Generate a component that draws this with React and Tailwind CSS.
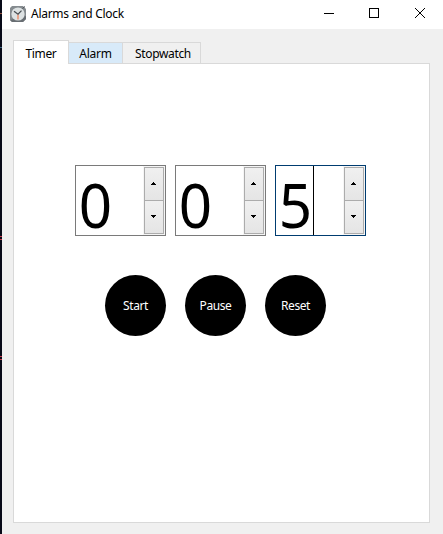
import React from 'react';

function ClockIcon() {
  return (
    <svg width="16" height="16" viewBox="0 0 16 16" className="mr-[5px] shrink-0">
      <path d="M2 0h11l3 3v10l-3 3H2l-2-2V2z" fill="#858b8f" />
      <path d="M0 14l2 2h11l3-3v-3z" fill="#686e73" />
      <circle cx="8" cy="8" r="6.6" fill="#dde2e3" />
      <path d="M8 8.5v5" stroke="#e8a68e" strokeWidth="2" />
      <path d="M4 5.2l4 3 3.5-3.6" stroke="#474d52" strokeWidth="1.3" fill="none" />
      <path d="M12.5 2.5L15 0.5" stroke="#474d52" strokeWidth="1" />
    </svg>
  );
}

function TitleBar() {
  return (
    <header className="flex h-[29px] shrink-0 items-start bg-white pl-2">
      <div className="flex h-[27px] grow items-center">
        <ClockIcon />
        <span className="whitespace-nowrap text-[12px] leading-4 tracking-[-0.27px]">Alarms and Clock</span>
      </div>
      <svg width="119" height="27" viewBox="324 0 119 27" shapeRendering="crispEdges" className="shrink-0">
        <path d="M324 13.5h10" stroke="#000" />
        <rect x="369.5" y="8.5" width="9" height="9" fill="none" stroke="#000" />
        <path d="M415 8l10 10M425 8l-10 10" stroke="#000" strokeWidth="1" shapeRendering="auto" />
      </svg>
    </header>
  );
}

function Tabs() {
  return (
    <nav className="flex h-[23px] items-end text-[12px] leading-4">
      <div className="z-10 -mb-px flex h-6 w-14 justify-center self-start border border-b-0 border-[#d9d9d9] bg-white pt-[5px] tracking-[-0.35px]">Timer</div>
      <div className="-ml-px flex h-[21px] w-[54px] justify-center border-t border-[#d9d9d9] bg-[#d8eaf9] pl-px pt-[3px] tracking-[-0.25px]">Alarm</div>
      <div className="flex h-[21px] w-[79px] justify-center border border-b-0 border-[#d9d9d9] bg-[#f0f0f0] pl-[3px] pt-[3px] tracking-[-0.35px]">Stopwatch</div>
    </nav>
  );
}

function StepButton({ down = false }) {
  return (
    <div className="flex h-[34px] w-5 items-start border border-[#acacac] bg-linear-to-b from-[#f0f0f0] to-[#e5e5e5] pl-[6px] pt-[14px]">
      <svg width="5" height="3" viewBox="0 0 5 3" shapeRendering="crispEdges">
        <path d={down ? 'M0 0h5v1H4v1H3v1H2V2H1V1H0z' : 'M2 0h1v1h1v1h1v1H0V2h1V1h1z'} />
      </svg>
    </div>
  );
}

function SpinBox({ value, focused = false }) {
  return (
    <div className={`flex h-[71px] w-[91px] justify-between border bg-white ${focused ? 'border-[#003c70]' : 'border-[#7a7a7a]'}`}>
      <div className="flex">
        <span className="w-[37px] origin-left scale-x-[0.94] whitespace-nowrap pl-[3px] pt-[5px] text-[62px] leading-[66px]">{value}</span>
        {focused && <span className="h-full w-px bg-black" />}
      </div>
      <div className="flex w-[22px] flex-col bg-[#f5f5f5] px-px pt-px">
        <StepButton />
        <div className="-mt-px">
          <StepButton down />
        </div>
      </div>
    </div>
  );
}

function RoundButton({ children }) {
  return (
    <button className="flex size-[61px] items-center justify-center rounded-full bg-black text-[12px] leading-4 tracking-[-0.4px] text-white">{children}</button>
  );
}

export default function App() {
  return (
    <div className="flex h-[534px] w-[443px] overflow-hidden bg-[#f0f0f0] font-['Noto_Sans','Open_Sans',sans-serif] text-black">
      <div className="flex w-[2px] shrink-0 flex-col bg-[#080a18]">
        <div className="mt-[13px] h-px bg-[#91503f]" />
        <div className="mt-[33px] h-px bg-[#3c6682]" />
        <div className="mt-[188px] h-px bg-[#c63c50]" />
        <div className="mt-[2px] h-px bg-[#c63c50]" />
        <div className="mt-[116px] h-px bg-[#c63c50]" />
        <div className="mt-[2px] h-px bg-[#c63c50]" />
      </div>
      <div className="flex grow flex-col">
        <TitleBar />
        <main className="flex grow flex-col pb-[11px] pl-[11px] pr-[13px] pt-[11px]">
          <Tabs />
          <section className="grow border border-[#d9d9d9] bg-white pl-[61px] pt-[101px]">
            <div className="flex gap-[9px]">
              <SpinBox value="0" />
              <SpinBox value="0" />
              <SpinBox value="5" focused />
            </div>
            <div className="ml-[30px] mt-[39px] flex gap-[19px]">
              <RoundButton>Start</RoundButton>
              <RoundButton>Pause</RoundButton>
              <RoundButton>Reset</RoundButton>
            </div>
          </section>
        </main>
      </div>
    </div>
  );
}
